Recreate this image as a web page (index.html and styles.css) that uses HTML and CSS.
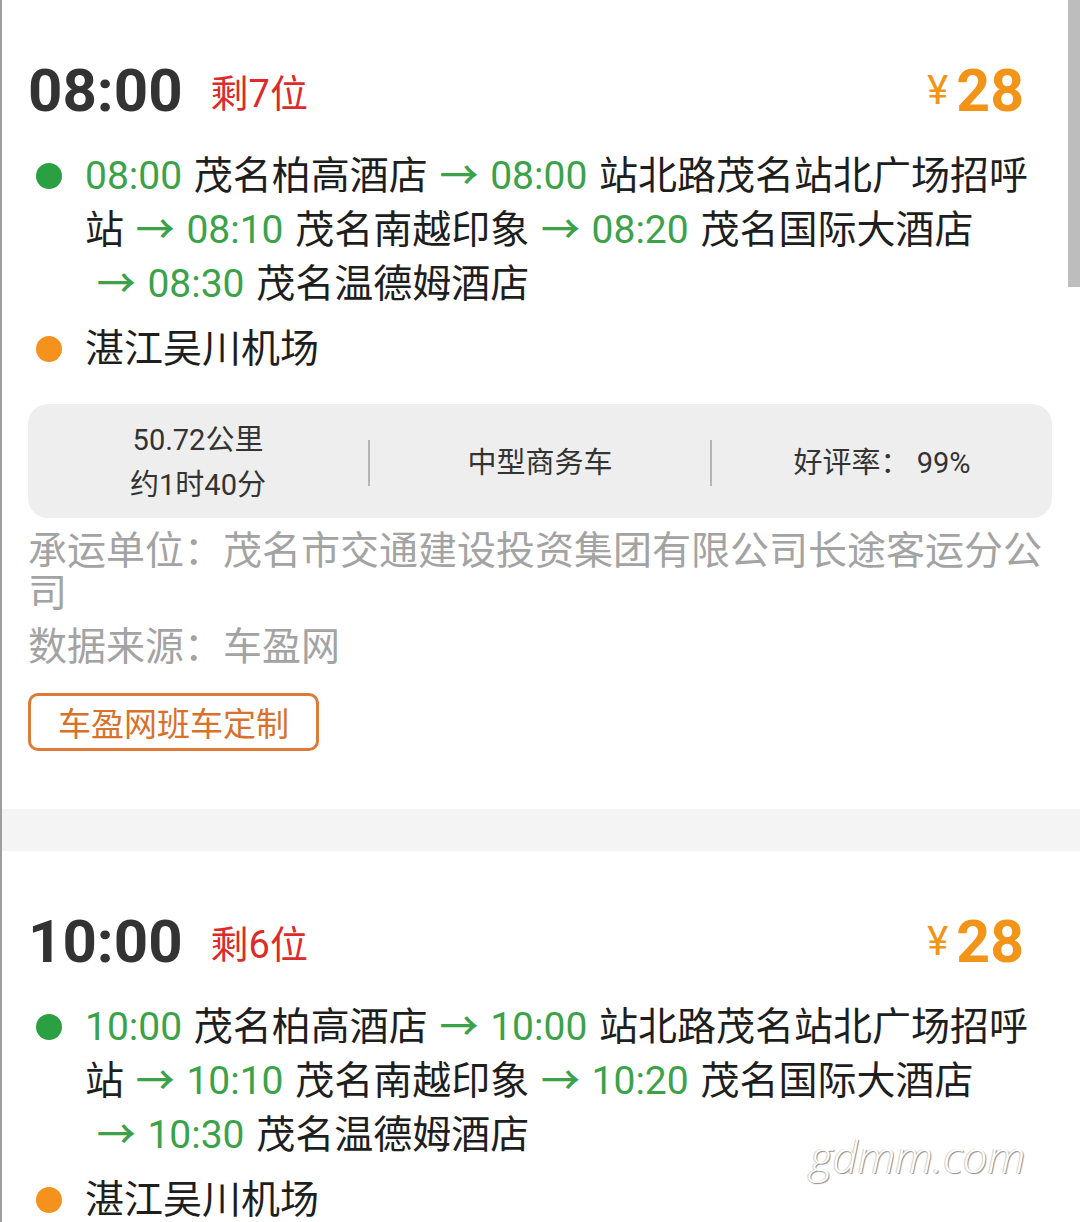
FILE: index.html
```html
<!DOCTYPE html>
<html lang="zh-CN">
<head>
    <meta charset="UTF-8">
    <meta name="viewport" content="width=device-width, initial-scale=1.0">
    <title>班车列表</title>
    <link rel="stylesheet" href="styles.css">
</head>
<body>
    <div class="page">
        <div class="trip">
            <div class="trip-head">
                <span class="depart">08:00</span>
                <span class="seats">剩7位</span>
                <span class="price"><span class="yen">¥</span><span class="amount">28</span></span>
            </div>
            <div class="route">
                <div class="stop">
                    <span class="dot dot-start"></span>
                    <div class="stop-text"><span class="tm">08:00</span> 茂名柏高酒店 <span class="arr">→</span>&nbsp;<span class="tm">08:00</span> 站北路茂名站北广场招呼站 <span class="arr">→</span>&nbsp;<span class="tm">08:10</span> 茂名南越印象 <span class="arr">→</span>&nbsp;<span class="tm">08:20</span> 茂名国际大酒店 &nbsp;<span class="arr">→</span>&nbsp;<span class="tm">08:30</span> 茂名温德姆酒店</div>
                </div>
                <div class="stop stop-end">
                    <span class="dot dot-end"></span>
                    <div class="stop-text">湛江吴川机场</div>
                </div>
            </div>
            <div class="info">
                <div class="info-col">50.72公里<br>约1时40分</div>
                <div class="info-sep"></div>
                <div class="info-col">中型商务车</div>
                <div class="info-sep"></div>
                <div class="info-col">好评率： 99%</div>
            </div>
            <p class="meta carrier">承运单位：茂名市交通建设投资集团有限公司长途客运分公司</p>
            <p class="meta source">数据来源：车盈网</p>
            <button class="book-btn">车盈网班车定制</button>
        </div>

        <div class="gap"></div>

        <div class="trip">
            <div class="trip-head">
                <span class="depart">10:00</span>
                <span class="seats">剩6位</span>
                <span class="price"><span class="yen">¥</span><span class="amount">28</span></span>
            </div>
            <div class="route">
                <div class="stop">
                    <span class="dot dot-start"></span>
                    <div class="stop-text"><span class="tm">10:00</span> 茂名柏高酒店 <span class="arr">→</span>&nbsp;<span class="tm">10:00</span> 站北路茂名站北广场招呼站 <span class="arr">→</span>&nbsp;<span class="tm">10:10</span> 茂名南越印象 <span class="arr">→</span>&nbsp;<span class="tm">10:20</span> 茂名国际大酒店 &nbsp;<span class="arr">→</span>&nbsp;<span class="tm">10:30</span> 茂名温德姆酒店</div>
                </div>
                <div class="stop stop-end">
                    <span class="dot dot-end"></span>
                    <div class="stop-text">湛江吴川机场</div>
                </div>
            </div>
            <div class="info">
                <div class="info-col">50.72公里<br>约1时40分</div>
                <div class="info-sep"></div>
                <div class="info-col">中型商务车</div>
                <div class="info-sep"></div>
                <div class="info-col">好评率： 99%</div>
            </div>
            <p class="meta carrier">承运单位：茂名市交通建设投资集团有限公司长途客运分公司</p>
            <p class="meta source">数据来源：车盈网</p>
            <button class="book-btn">车盈网班车定制</button>
        </div>
    </div>

    <div class="scrollbar"></div>
    <div class="watermark">gdmm.com</div>
</body>
</html>
```

FILE: styles.css
```css
body {
    margin: 0;
    height: 1222px;
    overflow: hidden;
    background: #fff;
    font-family: Roboto, "Noto Sans CJK SC", sans-serif;
    color: #1e1e1e;
}
.page {
    border-left: 2px solid #9e9e9e;
    min-height: 1222px;
}
.trip {
    padding: 50px 28px 58px 26px;
}
.trip-head {
    display: flex;
    align-items: center;
    height: 80px;
    padding-right: 28px;
}
.depart {
    font-size: 60px;
    font-weight: bold;
    color: #333;
}
.seats {
    margin-left: 28px;
    font-size: 38px;
    color: #dd2a2a;
}
.price {
    margin-left: auto;
    display: flex;
    align-items: center;
    color: #f29418;
}
.yen {
    font-size: 40px;
    margin-right: 8px;
}
.amount {
    font-size: 59px;
    font-weight: bold;
}
.route { margin-top: 19px; }
.stop { display: flex; }
.stop-end { margin-top: 11px; }
.dot {
    flex: none;
    width: 26px;
    height: 26px;
    border-radius: 50%;
    margin: 14px 23px 0 8px;
}
.dot-start { background: #2ba042; }
.dot-end { background: #f5921e; }
.stop-text {
    flex: 1;
    font-size: 39px;
    line-height: 54px;
    word-spacing: 2px;
}
.tm, .arr { color: #3ba24a; }
.arr { font-weight: 500; }
.info {
    display: flex;
    align-items: center;
    margin-top: 28px;
    padding: 14px 0 10px;
    background: #eeeeee;
    border-radius: 20px;
}
.info-col {
    flex: 1;
    text-align: center;
    font-size: 29px;
    line-height: 45px;
    color: #333;
}
.info-sep {
    width: 2px;
    height: 46px;
    background: #b5b5b5;
}
.meta {
    margin: 12px 0 0;
    font-size: 39px;
    line-height: 42px;
    color: #a3a3a3;
}
.book-btn {
    display: block;
    margin-top: 25px;
    height: 58px;
    padding: 0 27px;
    background: #fff;
    border: 3px solid #dc7a38;
    border-radius: 10px;
    font-family: inherit;
    font-size: 33px;
    color: #d8712c;
}
.gap {
    height: 42px;
    background: #f4f4f4;
}
.scrollbar {
    position: absolute;
    top: 0;
    right: 0;
    width: 12px;
    height: 287px;
    background: #bdbdbd;
}
.watermark {
    position: absolute;
    top: 1126px;
    left: 810px;
    font-family: "Open Sans", sans-serif;
    font-style: italic;
    font-weight: 300;
    font-size: 44px;
    color: #fff;
    text-shadow: 1px 1px 1px #8a8a8a, -1px 0 0 #cfcfcf;
}
```
